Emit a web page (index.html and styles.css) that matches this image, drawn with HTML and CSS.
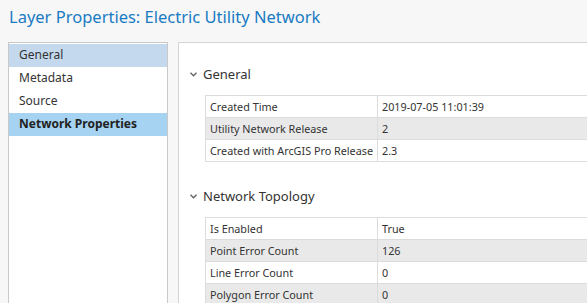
FILE: index.html
```html
<!DOCTYPE html>
<html lang="en">
<head>
  <meta charset="UTF-8">
  <title>Layer Properties</title>
  <link rel="stylesheet" href="styles.css">
</head>
<body>
  <!-- Dialog title -->
  <header class="dialog-title">
    <h1>Layer Properties: Electric Utility Network</h1>
  </header>

  <div class="dialog-body">
    <!-- Page list -->
    <ul class="page-list">
      <li class="hover">General</li>
      <li>Metadata</li>
      <li>Source</li>
      <li class="selected">Network Properties</li>
    </ul>

    <!-- Page content -->
    <div class="page-content">
      <div class="section">
        <h2 class="section-head">
          <svg class="chevron" width="7" height="5" viewBox="0 0 7 5"><path d="M0.5 0.8 L3.5 3.8 L6.5 0.8" fill="none" stroke="#666" stroke-width="1.4"/></svg>
          General
        </h2>
        <table class="prop-table">
          <tr><td>Created Time</td><td>2019-07-05 11:01:39</td></tr>
          <tr class="alt"><td>Utility Network Release</td><td>2</td></tr>
          <tr><td>Created with ArcGIS Pro Release</td><td>2.3</td></tr>
        </table>
      </div>

      <div class="section">
        <h2 class="section-head">
          <svg class="chevron" width="7" height="5" viewBox="0 0 7 5"><path d="M0.5 0.8 L3.5 3.8 L6.5 0.8" fill="none" stroke="#666" stroke-width="1.4"/></svg>
          Network Topology
        </h2>
        <table class="prop-table">
          <tr><td>Is Enabled</td><td>True</td></tr>
          <tr class="alt"><td>Point Error Count</td><td>126</td></tr>
          <tr><td>Line Error Count</td><td>0</td></tr>
          <tr class="alt"><td>Polygon Error Count</td><td>0</td></tr>
        </table>
      </div>
    </div>
  </div>
</body>
</html>
```

FILE: styles.css
```css
* {
  margin: 0;
  padding: 0;
  box-sizing: border-box;
  font-family: "Noto Sans", "Open Sans", sans-serif;
}

body {
  background-color: #f7f7f7;
  color: #333;
  overflow: hidden;
  height: 303px;
}

/* Title */
.dialog-title {
  height: 42px;
  padding: 5px 0 0 9px;
}

.dialog-title h1 {
  font-size: 16.5px;
  font-weight: 400;
  color: #1a7bc3;
  line-height: 24px;
  white-space: nowrap;
}

/* Body */
.dialog-body {
  display: flex;
  gap: 10px;
  padding-left: 8px;
}

.page-list {
  list-style: none;
  flex: 0 0 160px;
  height: 280px;
  background-color: #fff;
  border: 1px solid #c9c9c9;
  border-bottom: none;
  padding-top: 1px;
}

.page-list li {
  height: 23px;
  line-height: 22px;
  padding-left: 10px;
  font-size: 12px;
  color: #333;
  white-space: nowrap;
}

.page-list li.hover {
  background-color: #c5d9ee;
}

.page-list li.selected {
  background-color: #a6d3f2;
  font-weight: 700;
  color: #222;
}

.page-content {
  flex: 1;
  min-width: 0;
  overflow: hidden;
  height: 280px;
  background-color: #fff;
  border: 1px solid #d4d4d4;
  border-right: none;
  border-bottom: none;
  padding: 21px 0 0 11px;
}

.section + .section {
  margin-top: 24px;
}

.section-head {
  display: flex;
  align-items: center;
  gap: 6px;
  height: 20px;
  font-size: 13px;
  font-weight: 400;
  color: #333;
}

.chevron {
  flex-shrink: 0;
  margin-top: 1px;
}

.prop-table {
  margin: 11px 0 0 15px;
  width: 440px;
  table-layout: fixed;
  border-collapse: collapse;
  border: 1px solid #cdcdcd;
  font-size: 10.8px;
}

.prop-table td {
  height: 22px;
  padding: 0 4px;
  border: 1px solid #dcdcdc;
  color: #333;
  white-space: nowrap;
  overflow: hidden;
}

.prop-table td:first-child {
  width: 172px;
}

.prop-table tr.alt td {
  background-color: #e9e9e9;
}
```
